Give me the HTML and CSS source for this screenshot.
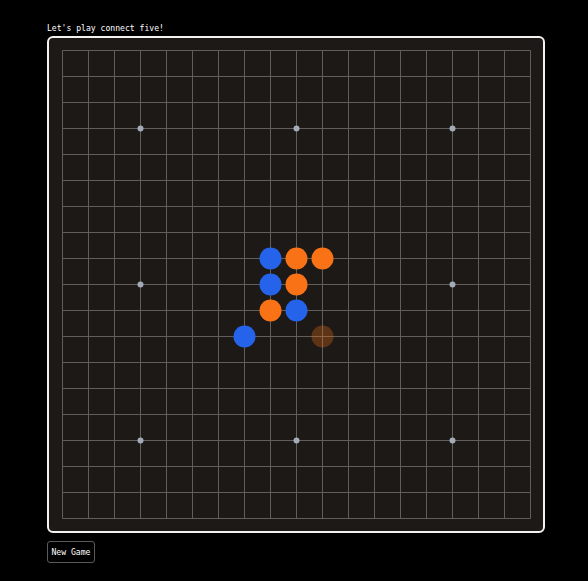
FILE: index.html
```html
<!DOCTYPE html>
<html>
<head>
<meta charset="utf-8">
<link rel="stylesheet" href="styles.css">
</head>
<body>
<div class="app">
  <div class="title">Let's play connect five!</div>
  <div class="board">
    <svg class="grid" width="469" height="469" viewBox="0 0 469 469" xmlns="http://www.w3.org/2000/svg">
      <g class="lines" stroke="#615e5a" stroke-width="1">
        <path d="M0.5 0.5V468.5M26.5 0.5V468.5M52.5 0.5V468.5M78.5 0.5V468.5M104.5 0.5V468.5M130.5 0.5V468.5M156.5 0.5V468.5M182.5 0.5V468.5M208.5 0.5V468.5M234.5 0.5V468.5M260.5 0.5V468.5M286.5 0.5V468.5M312.5 0.5V468.5M338.5 0.5V468.5M364.5 0.5V468.5M390.5 0.5V468.5M416.5 0.5V468.5M442.5 0.5V468.5M468.5 0.5V468.5"/>
        <path d="M0.5 0.5H468.5M0.5 26.5H468.5M0.5 52.5H468.5M0.5 78.5H468.5M0.5 104.5H468.5M0.5 130.5H468.5M0.5 156.5H468.5M0.5 182.5H468.5M0.5 208.5H468.5M0.5 234.5H468.5M0.5 260.5H468.5M0.5 286.5H468.5M0.5 312.5H468.5M0.5 338.5H468.5M0.5 364.5H468.5M0.5 390.5H468.5M0.5 416.5H468.5M0.5 442.5H468.5M0.5 468.5H468.5"/>
      </g>
      <g fill="#a3abb8">
        <circle cx="78.5" cy="78.5" r="3"/>
        <circle cx="234.5" cy="78.5" r="3"/>
        <circle cx="390.5" cy="78.5" r="3"/>
        <circle cx="78.5" cy="234.5" r="3"/>
        <circle cx="234.5" cy="234.5" r="3"/>
        <circle cx="390.5" cy="234.5" r="3"/>
        <circle cx="78.5" cy="390.5" r="3"/>
        <circle cx="234.5" cy="390.5" r="3"/>
        <circle cx="390.5" cy="390.5" r="3"/>
      </g>
      <g>
        <circle cx="208.5" cy="208.5" r="11" fill="#2563eb"/>
        <circle cx="234.5" cy="208.5" r="11" fill="#f97316"/>
        <circle cx="260.5" cy="208.5" r="11" fill="#f97316"/>
        <circle cx="208.5" cy="234.5" r="11" fill="#2563eb"/>
        <circle cx="234.5" cy="234.5" r="11" fill="#f97316"/>
        <circle cx="208.5" cy="260.5" r="11" fill="#f97316"/>
        <circle cx="234.5" cy="260.5" r="11" fill="#2563eb"/>
        <circle cx="182.5" cy="286.5" r="11" fill="#2563eb"/>
        <circle cx="260.5" cy="286.5" r="11" fill="#f97316" fill-opacity="0.3"/>
      </g>
    </svg>
  </div>
  <button class="new-game">New Game</button>
</div>
</body>
</html>
```
FILE: styles.css
```css
html, body {
  margin: 0;
  padding: 0;
  background: #000;
}
.app {
  padding: 23px 0 0 47px;
  display: flex;
  flex-direction: column;
  align-items: flex-start;
  font-family: "DejaVu Sans Mono", "Liberation Mono", monospace;
  color: #fff;
}
.title {
  font-size: 8.1px;
  line-height: 10px;
  height: 13px;
}
.board {
  background: #1c1917;
  border: 2px solid #f2f2f2;
  border-radius: 6px;
  padding: 12px 12px 12px 13px;
  display: flex;
}
.grid {
  display: block;
}
.new-game {
  margin-top: 8px;
  font-family: "DejaVu Sans Mono", "Liberation Mono", monospace;
  font-size: 8.1px;
  color: #fff;
  background: #000;
  border: 1px solid #5a5a5a;
  border-radius: 3px;
  height: 22px;
  width: 48px;
  padding: 0;
}
```
